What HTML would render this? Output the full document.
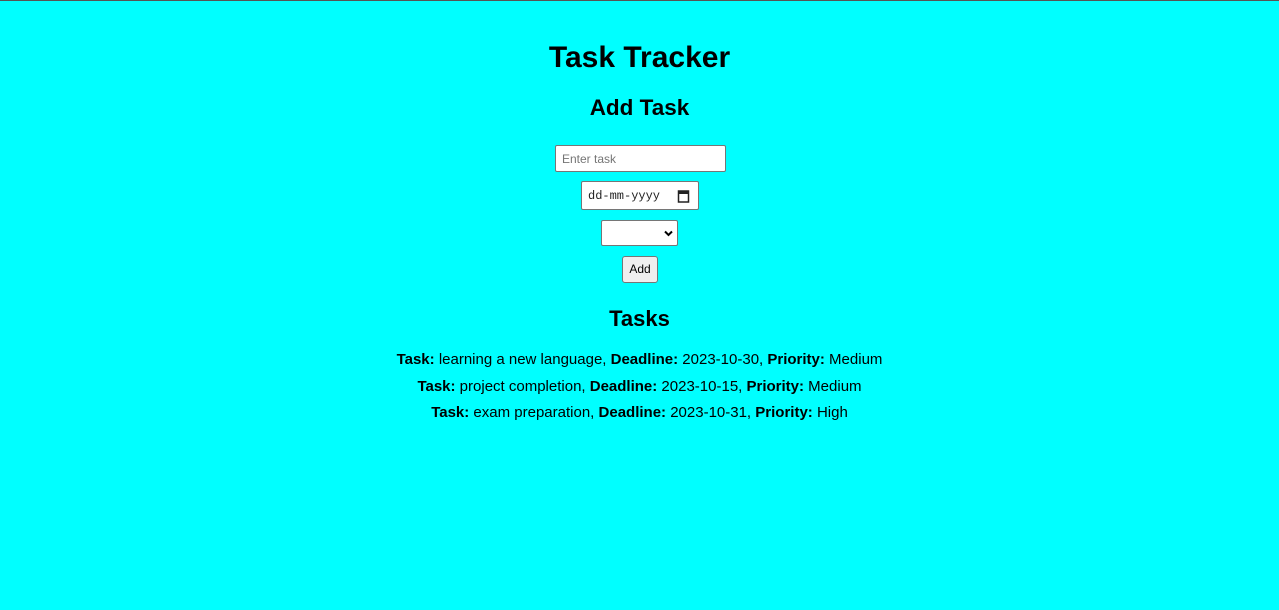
<!DOCTYPE html>
<html><head><style>
body{margin:0;width:1279px;height:610px;background:#00ffff;font-family:"Liberation Sans",Arial,sans-serif;border-top:1px solid #555;box-sizing:border-box;position:relative;overflow:hidden}
.c{position:absolute;left:0;width:1279px;text-align:center;color:#000}
h1,h2{margin:0;font-weight:bold}
.b{position:absolute;background:#fff;border:1px solid #767676;box-sizing:border-box;border-radius:2px}
</style></head><body>
<div class="c" style="top:38px"><h1 style="font-size:30px;line-height:37px">Task Tracker</h1></div>
<div class="c" style="top:93px"><h2 style="font-size:22.5px;line-height:28px">Add Task</h2></div>
<div class="b" style="left:555px;top:144px;width:171px;height:27px;font-size:12px;color:#757575;padding:6px 0 0 6px">Enter task</div>
<div class="b" style="left:581px;top:180px;width:118px;height:29px;font-family:'Liberation Mono',monospace;font-size:12px;color:#222;padding:7px 0 0 6px">dd-mm-yyyy
<svg style="position:absolute;left:95px;top:7px" width="13" height="14" viewBox="0 0 13 14"><rect x="1.5" y="2" width="10" height="11" fill="none" stroke="#222" stroke-width="1.5"/><rect x="1" y="2" width="11" height="3" fill="#222"/></svg></div>
<div class="b" style="left:601px;top:219px;width:77px;height:26px">
<svg style="position:absolute;left:62px;top:9px" width="9" height="7" viewBox="0 0 9 7"><path d="M1 1.5L4.5 5L8 1.5" fill="none" stroke="#000" stroke-width="2"/></svg></div>
<div class="b" style="left:622px;top:255px;width:36px;height:27px;background:#efefef;font-size:12px;text-align:center;line-height:25px;border-radius:3px">Add</div>
<div class="c" style="top:304px"><h2 style="font-size:22px;line-height:28px">Tasks</h2></div>
<div class="c" style="top:346px;font-size:15px;line-height:26.5px">
<div><b>Task:</b> learning a new language, <b>Deadline:</b> 2023-10-30, <b>Priority:</b> Medium</div>
<div><b>Task:</b> project completion, <b>Deadline:</b> 2023-10-15, <b>Priority:</b> Medium</div>
<div><b>Task:</b> exam preparation, <b>Deadline:</b> 2023-10-31, <b>Priority:</b> High</div>
</div>
</body></html>
